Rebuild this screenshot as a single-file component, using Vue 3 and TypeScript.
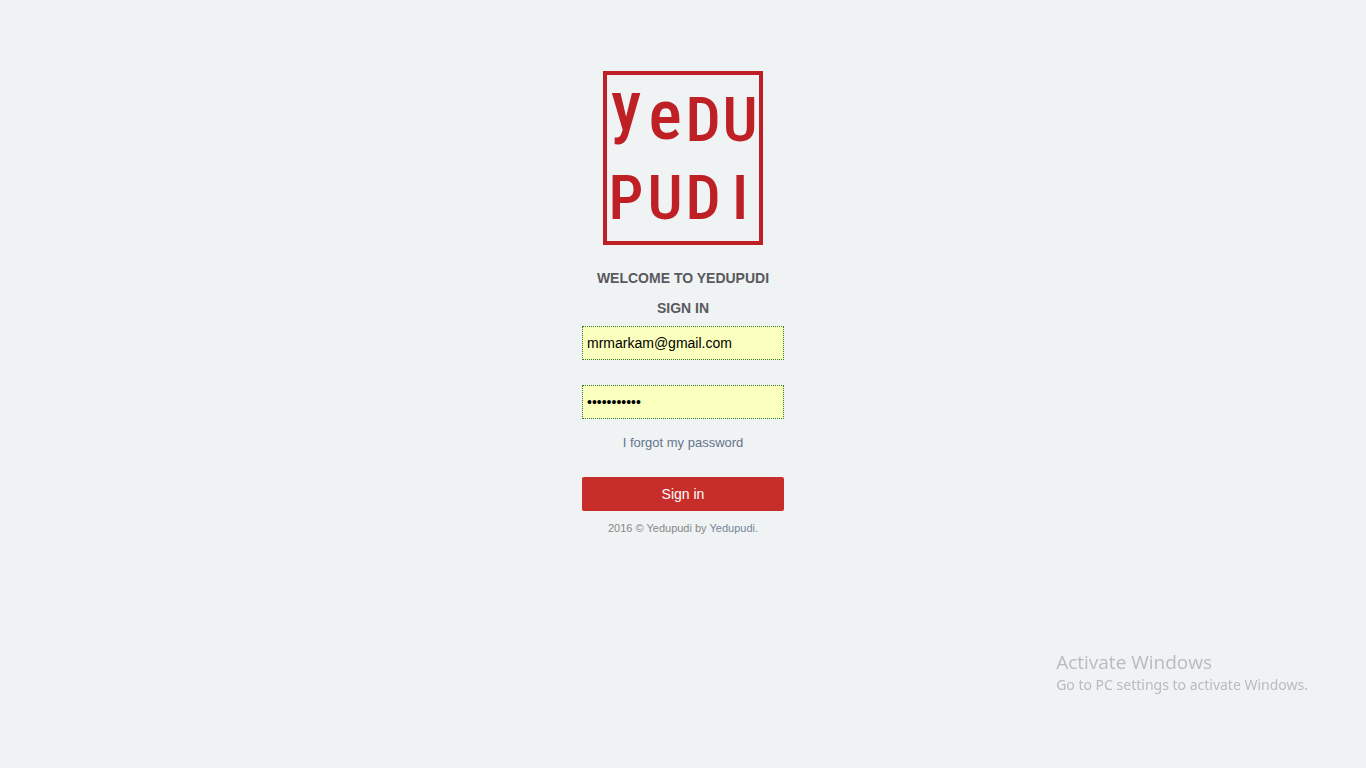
<script setup lang="ts">
import { ref } from 'vue'

const email = ref('mrmarkam@gmail.com')
const password = ref('yedupudi016')
const year = 2016
</script>

<template>
  <main class="login">
    <svg class="logo" viewBox="0 0 160 174" role="img" aria-label="Yedupudi">
      <rect x="2" y="2" width="156" height="170" fill="none" stroke="#be2026" stroke-width="4" />
      <g class="lettering">
        <text class="small-letter" x="23" y="59">y</text>
        <text class="small-letter" x="62" y="68">e</text>
        <text x="100" y="70">D</text>
        <text x="137" y="70">U</text>
        <text x="23" y="148">P</text>
        <text x="62" y="148">U</text>
        <text x="100" y="148">D</text>
        <text x="137" y="148">I</text>
      </g>
    </svg>
    <h1 class="title">WELCOME TO YEDUPUDI</h1>
    <h2 class="title">SIGN IN</h2>
    <form class="form" @submit.prevent>
      <input v-model="email" class="field" type="email" aria-label="Email" autocomplete="username" />
      <input v-model="password" class="field" type="password" aria-label="Password" autocomplete="current-password" />
      <a class="forgot" href="#">I forgot my password</a>
      <button class="submit" type="submit">Sign in</button>
    </form>
    <footer class="copyright">{{ year }} © Yedupudi by <a href="#">Yedupudi.</a></footer>
  </main>
  <aside class="activation">
    <p class="activation-title">Activate Windows</p>
    <p class="activation-text">Go to PC settings to activate Windows.</p>
  </aside>
</template>

<style>
body {
  margin: 0;
  background: #eff3f4;
}
</style>

<style scoped>
.login {
  display: flex;
  flex-direction: column;
  align-items: center;
  padding-top: 71px;
  font-family: "Liberation Sans", Arial, sans-serif;
  color: #5a5a5e;
}
.logo {
  width: 160px;
  height: 174px;
  margin-bottom: 18px;
}
.lettering {
  fill: #be2026;
  font: 500 62px "Roboto Condensed", Roboto, sans-serif;
  text-anchor: middle;
}
.small-letter {
  font-size: 70px;
}
.title {
  margin: 0;
  font-size: 14px;
  line-height: 30px;
  font-weight: bold;
}
.form {
  display: flex;
  flex-direction: column;
  width: 202px;
  margin-top: 3px;
}
.field {
  box-sizing: border-box;
  width: 100%;
  height: 34px;
  margin: 0 0 25px;
  padding: 0 4px;
  border: 1px dotted #2e7d32;
  border-radius: 0;
  outline: none;
  background: #faffbd;
  color: #000;
  font-family: inherit;
  font-size: 14px;
}
.field + .field {
  margin-bottom: 14px;
}
.forgot {
  margin-bottom: 24px;
  text-align: center;
  text-decoration: none;
  font-size: 13px;
  line-height: 20px;
  color: #64748c;
}
.submit {
  height: 34px;
  padding: 0;
  border: 0;
  border-radius: 2px;
  background: #c82e29;
  color: #fff;
  font-family: inherit;
  font-size: 14px;
}
.copyright {
  margin-top: 7px;
  font-size: 11px;
  line-height: 20px;
  color: #868686;
}
.copyright a {
  color: #76839b;
  text-decoration: none;
}
.activation {
  position: fixed;
  right: 58px;
  bottom: 73px;
  color: #b9bbbc;
  font-family: "Open Sans", sans-serif;
}
.activation p {
  margin: 0;
}
.activation-title {
  font-size: 19px;
  line-height: 26px;
}
.activation-text {
  font-family: "Noto Sans", sans-serif;
  font-size: 14px;
  line-height: 20px;
}
</style>
